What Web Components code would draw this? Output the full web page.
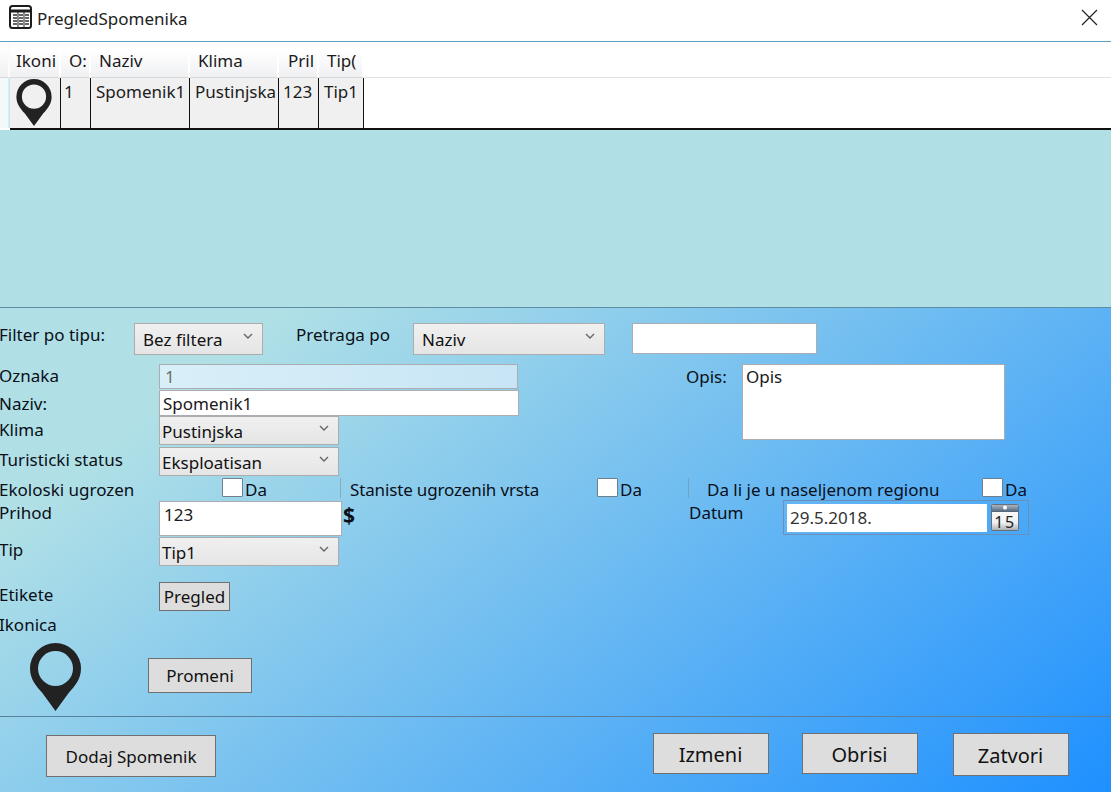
<!DOCTYPE html>
<html>
<head>
<meta charset="utf-8">
<title>PregledSpomenika</title>
<style>
  html, body { margin: 0; padding: 0; height: 100%; overflow: hidden; background: #fff; }
  body { font-family: "Noto Sans", "Liberation Sans", sans-serif; font-size: 17px; line-height: 23px; color: #0a0f18; }
</style>
</head>
<body>
<pregled-window></pregled-window>

<script>
(function () {
  const PIN = `<svg viewBox="0 0 51 68" width="100%" height="100%" style="display:block">
    <path fill="#222" fill-rule="evenodd" d="M25.5 0A25.5 25.5 0 0 1 51 25.5C51 36 45 43 39 49.500L25.500 68L12 49.500C6 43 0 36 0 25.500A25.500 25.500 0 0 1 25.500 0ZM25.500 8A17.500 17.500 0 1 0 25.500 43A17.500 17.500 0 1 0 25.500 8Z"/>
  </svg>`;

  // small helper, every element is just a shadow root with fixed markup
  function define(name, html) {
    customElements.define(name, class extends HTMLElement {
      constructor() {
        super();
        this.attachShadow({ mode: 'open' }).innerHTML = html;
      }
    });
  }

  define('pin-icon', `<style>:host{display:block}</style>${PIN}`);

  define('window-title', `
    <style>
      :host { display:flex; align-items:center; height:42px; box-sizing:border-box; padding:0 0 4px 9px; background:#fff; border-bottom:1px solid #5f9fc0; }
      svg { display:block; }
      .app { margin-top:-4px; }
      span { margin-left:5px; color:#222; }
      .close { margin-left:auto; margin-right:13px; margin-top:-3px; }
    </style>
    <svg class="app" width="23" height="24" viewBox="0 0 23 24">
      <rect x="1" y="1" width="21" height="22" rx="2.500" fill="#fff" stroke="#1c1c1c" stroke-width="2"/>
      <path d="M1 6h21" stroke="#1c1c1c" stroke-width="3"/>
      <path d="M4 10h4M10 10h4M16 10h4M4 13h4M10 13h4M16 13h4M4 16h4M10 16h4M16 16h4M4 19h4M10 19h4M16 19h4" stroke="#333" stroke-width="1.400"/>
      <path d="M9 6v16M15 6v16" stroke="#1c1c1c" stroke-width="1"/>
    </svg>
    <span>PregledSpomenika</span>
    <svg class="close" width="17" height="17" viewBox="0 0 17 17"><path d="M1 1l15 15M16 1L1 16" stroke="#222" stroke-width="1.200" fill="none"/></svg>
  `);

  define('monument-table', `
    <style>
      :host { display:block; height:88px; background:#fff; overflow:hidden; color:#1b1b1b; }
      .grid { display:grid; grid-template-columns:10px 51px 30px 99px 89px 40px 45px 1fr; grid-template-rows:36px 52px; }
      .h { box-sizing:border-box; height:36px; padding:7px 0 0 var(--x,7px); background:linear-gradient(#fff 25%, #eff0f2); border-right:2px solid #fff; border-bottom:1px solid #d8d8d8; white-space:nowrap; }
      .gut { padding:0; background:linear-gradient(#fff 10%,#f0f0f0); border-right:2px solid #fbfbfb; }
      .end { background:#fff; border:0; border-bottom:1px solid #e2e2e2; }
      .c { box-sizing:border-box; overflow:hidden; white-space:nowrap; background:#f0f0f0; border-right:1px solid #111; border-bottom:2px solid #111; padding:2px 0 0 5px; line-height:24px; }
      .g { box-sizing:border-box; background:#d6eefa; border-left:8px solid #f3f8fb; border-right:1px solid #c3e5f6; height:50px; }
      .e { background:#fff; border-right:0; }
      .icon { padding:1px 0 0 6px; }
      pin-icon { width:36px; height:47px; }
    </style>
    <div class="grid">
      <div class="h gut"></div>
      <div class="h" style="--x:6px">Ikoni</div>
      <div class="h" style="--x:8px">O:</div>
      <div class="h" style="--x:8px">Naziv</div>
      <div class="h" style="--x:8px">Klima</div>
      <div class="h" style="--x:9px">Pril</div>
      <div class="h" style="--x:8px">Tip(</div>
      <div class="h end"></div>
      <div class="g"></div>
      <div class="c icon"><pin-icon></pin-icon></div>
      <div class="c" style="padding-left:3px">1</div>
      <div class="c">Spomenik1</div>
      <div class="c">Pustinjska</div>
      <div class="c" style="padding-left:4px">123</div>
      <div class="c" style="padding-left:5px">Tip1</div>
      <div class="c e"></div>
    </div>
  `);

  define('drop-down', `
    <style>
      :host { display:flex; align-items:center; justify-content:space-between; box-sizing:border-box; height:var(--h,29px); width:var(--w,180px); padding:var(--pt,2px) 9px 0 var(--x,2px); background:linear-gradient(#f0f0f0,#e5e5e5); border:1.500px solid #acacac; white-space:nowrap; color:#111; }
      svg { display:block; margin-top:-6px; }
    </style>
    <slot></slot>
    <svg width="10" height="7" viewBox="0 0 10 7"><path d="M1 1l4 4 4-4" fill="none" stroke="#666" stroke-width="1.400"/></svg>
  `);

  define('text-box', `
    <style>
      :host { display:block; box-sizing:border-box; height:var(--h,26px); width:var(--w,100px); padding:var(--p,0 3px); background:#fff; border:1.500px solid #abadb3; white-space:nowrap; color:#1a1a1a; line-height:var(--lh,25px); }
      :host([disabled]) { background:linear-gradient(90deg,#d9eff8,#c7e5f5); color:#6d6d6d; }
    </style>
    <slot></slot>
  `);

  define('plain-button', `
    <style>
      :host { display:flex; align-items:center; justify-content:center; box-sizing:border-box; width:var(--w,100px); height:var(--h,40px); padding-top:var(--pt,0); background:#dddddd; border:1.500px solid #707070; color:#111; white-space:nowrap; font-size:var(--fs,17px); }
    </style>
    <slot></slot>
  `);

  define('check-da', `
    <style>
      :host { display:flex; align-items:flex-start; white-space:nowrap; margin-top:2px; }
      i { display:block; box-sizing:border-box; width:21px; height:19px; margin-right:2px; background:#fff; border:1px solid #6f7f8c; border-radius:1px; }
    </style>
    <i></i><span>Da</span>
  `);

  define('date-box', `
    <style>
      :host { display:flex; align-items:center; box-sizing:border-box; width:246px; height:35px; padding:0 9px 0 3px; border:1.500px solid #6a8fb8; }
      .v { box-sizing:border-box; width:200px; height:28px; background:#fff; padding:0 3px; line-height:28px; color:#333; }
      svg { margin-left:4px; display:block; }
    </style>
    <div class="v"><slot></slot></div>
    <svg width="28" height="27" viewBox="0 0 28 27">
      <defs>
        <linearGradient id="paper" x1="0" y1="0" x2="0" y2="1"><stop offset="0" stop-color="#ffffff"/><stop offset=".7" stop-color="#f0f0f0"/><stop offset="1" stop-color="#a9acb0"/></linearGradient>
        <linearGradient id="band" x1="0" y1="0" x2="0" y2="1"><stop offset="0" stop-color="#a7b6c6"/><stop offset="1" stop-color="#4f6178"/></linearGradient>
      </defs>
      <rect x=".5" y=".5" width="27" height="26" rx="1" fill="url(#paper)" stroke="#6a6f76"/>
      <rect x="1" y="1" width="26" height="7" fill="url(#band)"/>
      <circle cx="14" cy="3.500" r="2" fill="#fff"/>
      <text x="14" y="23.500" font-family="Noto Sans, sans-serif" font-size="16" fill="#222" text-anchor="middle" letter-spacing="1.500">15</text>
    </svg>
  `);

  define('monument-form', `
    <style>
      :host { display:block; box-sizing:border-box; height:410px; padding-top:15px; border-top:1px solid #5f8ea3; border-bottom:1px solid #5a7f9c; }
      .row { display:flex; align-items:flex-start; }
      .row > span, .grid > span { white-space:nowrap; margin-left:-1px; }
      .top { height:41px; }
      .top drop-down { --h:32px; --x:8px; --pt:0px; }
      .mid { height:112px; }
      .grid { display:grid; grid-template-columns:159px auto; width:686px; grid-auto-rows:min-content; align-items:start; }
      .opis { width:56px; line-height:26px; margin-left:0 !important; }
      .eko { height:24px; }
      .eko > span { padding-top:2px; box-sizing:border-box; }
      .sep { width:1px; height:20px; background:rgba(120,140,150,.55); margin-top:2px; }
      .prihod { height:36px; }
      .tip { height:45px; }
    </style>
    <div class="row top">
      <span style="width:135px">Filter po tipu:</span>
      <drop-down style="--w:129px">Bez filtera</drop-down>
      <span style="width:117px;margin-left:33px">Pretraga po</span>
      <drop-down style="--w:192px">Naziv</drop-down>
      <text-box style="--w:185px;--h:31px;margin-left:27px"></text-box>
    </div>
    <div class="row mid">
      <div class="grid">
        <span style="line-height:24px;height:26px">Oznaka</span>
        <text-box disabled style="--w:359px;--h:25px;--p:0 5px;--lh:24px">1</text-box>
        <span style="line-height:24px;padding-top:2px;height:24px">Naziv:</span>
        <text-box style="--w:360px;--h:26px">Spomenik1</text-box>
        <span style="line-height:28px;height:30px">Klima</span>
        <drop-down>Pustinjska</drop-down>
        <span style="line-height:28px;height:30px">Turisticki status</span>
        <drop-down style="margin-top:1px">Eksploatisan</drop-down>
      </div>
      <span class="opis">Opis:</span>
      <text-box style="--w:263px;--h:76px;--lh:24px">Opis</text-box>
    </div>
    <div class="row eko">
      <span style="width:223px">Ekoloski ugrozen</span>
      <check-da style="width:118px"></check-da>
      <div class="sep"></div>
      <span style="width:256px;padding-left:9px;margin-left:0;letter-spacing:-.15px">Staniste ugrozenih vrsta</span>
      <check-da style="width:91px"></check-da>
      <div class="sep"></div>
      <span style="width:293px;padding-left:18px;margin-left:0">Da li je u naseljenom regionu</span>
      <check-da></check-da>
    </div>
    <div class="row prihod">
      <span style="width:160px;line-height:26px">Prihod</span>
      <text-box style="--w:183px;--h:35px;--p:0 4px;--lh:26px;margin-top:1px">123</text-box>
      <b style="width:347px;font-size:21px;line-height:31px;padding-left:1px;box-sizing:border-box">$</b>
      <span style="width:94px;margin-left:0;line-height:26px">Datum</span>
      <date-box>29.5.2018.</date-box>
    </div>
    <div class="row tip">
      <span style="width:160px;line-height:28px">Tip</span>
      <drop-down style="margin-top:1px">Tip1</drop-down>
    </div>
    <div class="row" style="height:32px">
      <span style="width:160px;line-height:28px">Etikete</span>
      <plain-button style="--w:71px;--h:29px;margin-top:1px">Pregled</plain-button>
    </div>
    <div class="row" style="height:30px"><span style="line-height:24px">Ikonica</span></div>
    <div class="row" style="padding-left:30px">
      <pin-icon style="width:51px;height:68px;margin-right:67px"></pin-icon>
      <plain-button style="--w:104px;--h:35px;margin-top:15px">Promeni</plain-button>
    </div>
  `);

  define('action-bar', `
    <style>
      :host { display:flex; align-items:flex-start; height:75px; padding:16px 0 0 46px; box-sizing:border-box; }
      .spacer { width:436.500px; }
    </style>
    <plain-button style="--w:170px;--h:42px;margin-top:2px">Dodaj Spomenik</plain-button>
    <div class="spacer"></div>
    <plain-button style="--w:116px;--h:41px;--fs:20px;--pt:1px">Izmeni</plain-button>
    <plain-button style="--w:116px;--h:41px;--fs:20px;--pt:1px;margin-left:33px">Obrisi</plain-button>
    <plain-button style="--w:116px;--h:43px;--fs:20px;--pt:1px;margin-left:35px">Zatvori</plain-button>
  `);

  define('pregled-window', `
    <style>
      :host { display:block; width:1111px; height:792px; overflow:hidden; }
      .teal { height:177px; background:#b0e0e6; }
      .grad { background:linear-gradient(142deg,#b0e0e6 16.600%,#1e90ff 100%); height:485px; }
    </style>
    <window-title></window-title>
    <monument-table></monument-table>
    <div class="teal"></div>
    <div class="grad">
      <monument-form></monument-form>
      <action-bar></action-bar>
    </div>
  `);
})();
</script>
</body>
</html>
